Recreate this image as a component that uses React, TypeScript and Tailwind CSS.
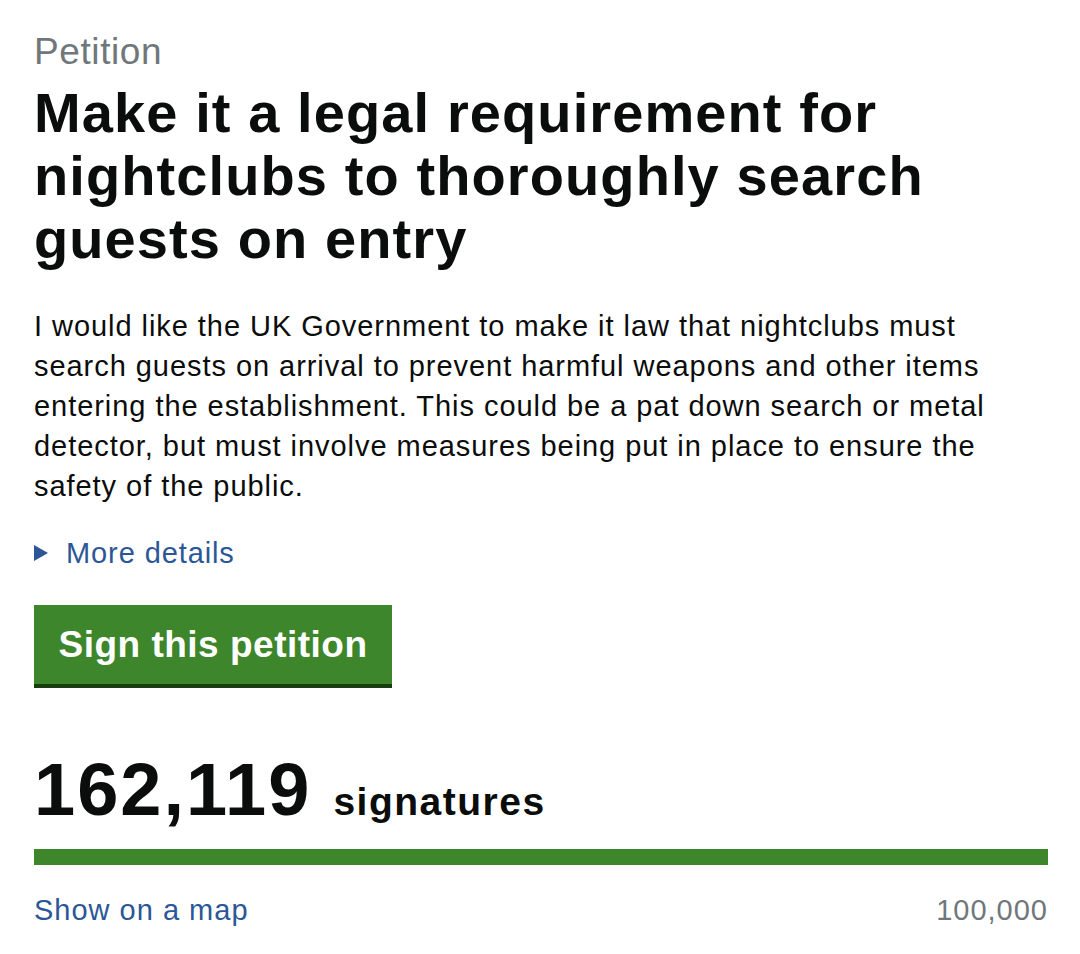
import React from 'react';

const font = { fontFamily: '"Liberation Sans", Arial, sans-serif' };

export default function App() {
  return (
    <div className="min-h-[954px] w-[1080px] bg-white text-[#0b0c0c]" style={font}>
      <div className="pl-[34px] pr-[32px] pt-[32px]">
        <p className="text-[37px] leading-[40px] tracking-[0.6px] text-[#6f777b]">Petition</p>

        <h1 className="mt-[9px] max-w-[900px] text-[56px] font-bold leading-[63px] tracking-[1.1px]">
          Make it a legal requirement for nightclubs to thoroughly search guests on entry
        </h1>

        <p className="mt-[36px] max-w-[1000px] text-[29px] leading-[40px] tracking-[0.95px]">
          I would like the UK Government to make it law that nightclubs must search guests on arrival to
          prevent harmful weapons and other items entering the establishment. This could be a pat down search
          or metal detector, but must involve measures being put in place to ensure the safety of the public.
        </p>

        {/* Details toggle */}
        <div className="mt-[27px] flex items-center gap-[18px] text-[29px] leading-[40px] tracking-[0.9px] text-[#2b5797]">
          <span className="inline-block h-0 w-0 border-y-[8px] border-l-[14px] border-y-transparent border-l-[#2b5797]" />
          <span>More details</span>
        </div>

        <button className="mt-[32px] flex h-[79px] w-[358px] items-center justify-center bg-[#3d862b] text-[37px] font-bold tracking-[0.5px] text-white shadow-[0_4px_0_#173d10]">
          Sign this petition
        </button>

        {/* Signature count */}
        <div className="mt-[66px] flex items-baseline gap-[22px]">
          <span className="text-[74px] font-bold leading-[80px] tracking-[2px]">162,119</span>
          <span className="text-[39px] font-bold tracking-[1.5px]">signatures</span>
        </div>

        <div className="mt-[17px] h-[16px] w-full bg-[#3d862b]" />

        <div className="mt-[25px] flex items-center justify-between text-[29px] leading-[40px] tracking-[1px]">
          <a className="text-[#2b5797]">Show on a map</a>
          <span className="text-[#6f777b]">100,000</span>
        </div>
      </div>
    </div>
  );
}
